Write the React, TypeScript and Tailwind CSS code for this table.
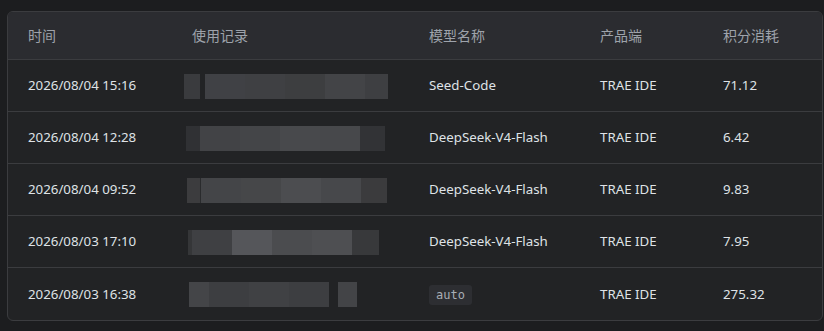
type Seg = { w: number; c: string };

type Row = {
  time: string;
  lead: number;
  blur: Seg[];
  model: string;
  mono?: boolean;
  product: string;
  credits: string;
};

// Blurred "使用记录" cells, drawn as flat grey strips
const ROWS: Row[] = [
  {
    time: "2026/08/04 15:16",
    lead: 13,
    blur: [
      { w: 16, c: "#3a3b3e" },
      { w: 5, c: "transparent" },
      { w: 40, c: "#404145" },
      { w: 40, c: "#3f4043" },
      { w: 40, c: "#3d3e40" },
      { w: 40, c: "#434447" },
      { w: 23, c: "#3e3f42" },
    ],
    model: "Seed-Code",
    product: "TRAE IDE",
    credits: "71.12",
  },
  {
    time: "2026/08/04 12:28",
    lead: 15,
    blur: [
      { w: 14, c: "#303134" },
      { w: 40, c: "#424346" },
      { w: 40, c: "#444548" },
      { w: 40, c: "#48494c" },
      { w: 40, c: "#47484b" },
      { w: 25, c: "#323336" },
    ],
    model: "DeepSeek-V4-Flash",
    product: "TRAE IDE",
    credits: "6.42",
  },
  {
    time: "2026/08/04 09:52",
    lead: 16,
    blur: [
      { w: 13, c: "#3c3c3e" },
      { w: 1, c: "#2a2b2d" },
      { w: 40, c: "#444548" },
      { w: 40, c: "#464749" },
      { w: 40, c: "#4c4d50" },
      { w: 40, c: "#47484b" },
      { w: 26, c: "#3b3b3d" },
    ],
    model: "DeepSeek-V4-Flash",
    product: "TRAE IDE",
    credits: "9.83",
  },
  {
    time: "2026/08/03 17:10",
    lead: 17,
    blur: [
      { w: 4, c: "#353638" },
      { w: 40, c: "#3f4043" },
      { w: 40, c: "#55565a" },
      { w: 40, c: "#4b4c4f" },
      { w: 40, c: "#4e4f52" },
      { w: 27, c: "#38393b" },
    ],
    model: "DeepSeek-V4-Flash",
    product: "TRAE IDE",
    credits: "7.95",
  },
  {
    time: "2026/08/03 16:38",
    lead: 18,
    blur: [
      { w: 20, c: "#444548" },
      { w: 40, c: "#3d3e41" },
      { w: 40, c: "#404144" },
      { w: 40, c: "#3d3e41" },
      { w: 9, c: "transparent" },
      { w: 19, c: "#434447" },
    ],
    model: "auto",
    mono: true,
    product: "TRAE IDE",
    credits: "275.32",
  },
];

const COLS = "grid grid-cols-[163px_237px_171px_123px_1fr]";

export default function App() {
  return (
    <div
      className="h-[331px] w-[824px] overflow-hidden bg-[#1c1d1f] pt-[11px] pl-[7px] pr-[1px]"
      style={{ fontFamily: '"Noto Sans", "Noto Sans CJK SC", sans-serif' }}
    >
      <div className="overflow-hidden rounded-[6px] border border-[#3b3c3f] bg-[#222325]">
        <div
          className={`${COLS} h-[48px] items-center border-b border-[#3b3c3f] bg-[#2b2c30] text-[14px] text-[#9ea3ab]`}
        >
          <div className="pl-[20px]">时间</div>
          <div className="pl-[21px]">使用记录</div>
          <div className="pl-[21px]">模型名称</div>
          <div className="pl-[21px]">产品端</div>
          <div className="pl-[21px]">积分消耗</div>
        </div>

        {ROWS.map((r, i) => (
          <div
            key={i}
            className={`${COLS} h-[52px] items-center pt-[1px] text-[13.3px] text-[#dfe2e6] ${
              i < ROWS.length - 1 ? "border-b border-[#3b3c3f]" : ""
            }`}
          >
            <div className="pl-[20px]">{r.time}</div>
            <div className="flex h-[25px]" style={{ paddingLeft: r.lead }}>
              {r.blur.map((s, j) => (
                <div
                  key={j}
                  className="h-full"
                  style={{ width: s.w, backgroundColor: s.c }}
                />
              ))}
            </div>
            <div className="pl-[21px]">
              {r.mono ? (
                <span
                  className="inline-block rounded-[3px] bg-[#2d2e32] px-[7px] py-[1px] text-[12px] text-[#a8adb5]"
                  style={{ fontFamily: '"DejaVu Sans Mono", monospace' }}
                >
                  {r.model}
                </span>
              ) : (
                r.model
              )}
            </div>
            <div className="pl-[21px]">{r.product}</div>
            <div className="pl-[21px]">{r.credits}</div>
          </div>
        ))}
      </div>
    </div>
  );
}
